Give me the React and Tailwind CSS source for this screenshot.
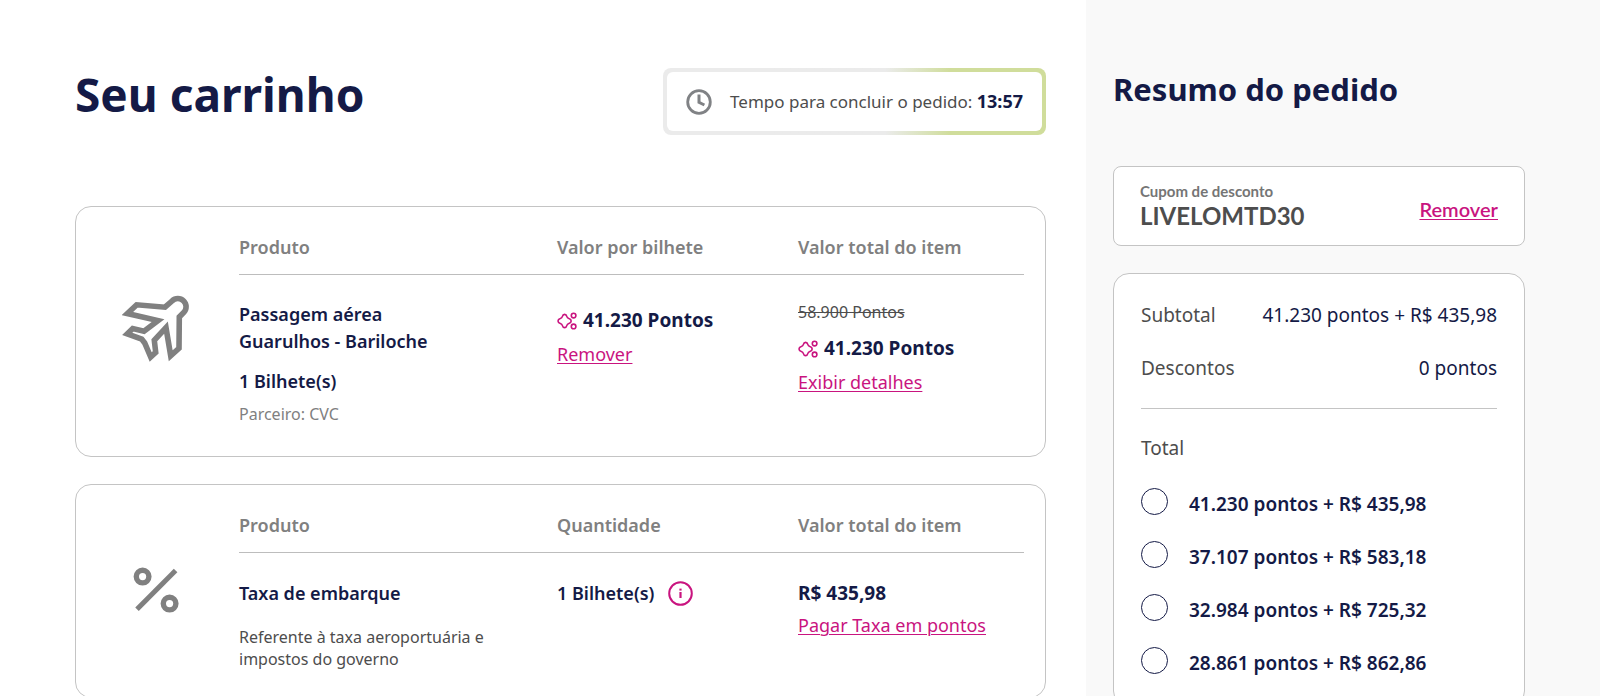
import React from "react";

const LINK = "text-[#c9147f] underline underline-offset-2 decoration-1 cursor-pointer";

function ClockIcon() {
  return (
    <svg width="26" height="26" viewBox="0 0 26 26" fill="none" stroke="#808285" aria-hidden="true">
      <circle cx="13" cy="13" r="11.3" strokeWidth="2.8" />
      <path d="M13 5.6V13.4L18.4 16" strokeWidth="3" />
    </svg>
  );
}

function PlaneIcon() {
  return (
    <svg width="68" height="68" viewBox="0 0 68 68" fill="none" stroke="#808080" strokeWidth="5.6" aria-hidden="true">
      <path d="M14.7 10.8L5.3 19.6L36 26.6L22 37.3L10.7 34.6L5.3 39.8L19.7 45L22.7 49L28.7 63L33.7 58.3L32.3 46.3L44 33.7L48.7 61.8L57 54.3L57.3 23L61.7 18.6A8.2 8.2 0 0 0 50 7L43 13.2Z" />
    </svg>
  );
}

function PercentIcon() {
  return (
    <svg width="46" height="46" viewBox="0 0 46 46" fill="none" stroke="#808080" aria-hidden="true">
      <circle cx="9.6" cy="9.6" r="6.3" strokeWidth="5.4" />
      <circle cx="36.6" cy="36.6" r="6.3" strokeWidth="5.4" />
      <path d="M42.6 3.6L4 42.2" strokeWidth="5" />
    </svg>
  );
}

function PointsIcon() {
  return (
    <svg width="20" height="18" viewBox="0 0 20 18" fill="none" stroke="#c9147f" strokeWidth="1.6" aria-hidden="true">
      <path d="M7.6 2.4C9 2.4 9.6 3.3 9.9 4.6C10.2 5.8 10.8 6.2 11.9 6.6C13.3 7 14.2 7.8 14.2 9C14.2 10.2 13.3 11 11.9 11.4C10.8 11.8 10.2 12.2 9.9 13.4C9.6 14.7 9 15.6 7.6 15.6C6.2 15.6 5.6 14.7 5.3 13.4C5 12.2 4.4 11.8 3.3 11.4C1.9 11 1 10.2 1 9C1 7.8 1.9 7 3.3 6.6C4.4 6.2 5 5.8 5.3 4.6C5.6 3.3 6.2 2.4 7.6 2.4Z" />
      <circle cx="16.6" cy="3.6" r="2.3" />
      <circle cx="16.6" cy="14.4" r="2.3" />
    </svg>
  );
}

function InfoIcon() {
  return (
    <svg width="25" height="25" viewBox="0 0 25 25" fill="none" stroke="#c9147f" aria-hidden="true">
      <circle cx="12.5" cy="12.5" r="11.3" strokeWidth="2" />
      <path d="M12.5 11V17" strokeWidth="2.2" />
      <path d="M12.5 7.6V9.6" strokeWidth="2.2" />
    </svg>
  );
}

function Points({ children }) {
  return (
    <p className="flex items-center gap-1.5 text-[19px] leading-[27px] font-bold">
      <PointsIcon />
      {children}
    </p>
  );
}

function CartItem({ icon, columns, bottom, children }) {
  return (
    <article className={`flex rounded-2xl border border-[#c4c4c4] pt-6 pr-[21px] ${bottom}`}>
      <div className="flex w-[163px] shrink-0 items-center justify-center pr-1">{icon}</div>
      <table className="w-full table-fixed border-collapse text-left text-lg leading-[27px] text-[#141a46]">
        <thead>
          <tr className="border-b border-[#bdbdbd] text-[#808080]">
            <th scope="col" className="w-[318px] pb-[11px] font-semibold leading-8">{columns[0]}</th>
            <th scope="col" className="w-[241px] pb-[11px] font-semibold leading-8">{columns[1]}</th>
            <th scope="col" className="pb-[11px] font-semibold leading-8">{columns[2]}</th>
          </tr>
        </thead>
        <tbody>
          <tr className="align-top">{children}</tr>
        </tbody>
      </table>
    </article>
  );
}

const OPTIONS = [
  "41.230 pontos + R$ 435,98",
  "37.107 pontos + R$ 583,18",
  "32.984 pontos + R$ 725,32",
  "28.861 pontos + R$ 862,86",
];

export default function App() {
  return (
    <div className="flex h-screen overflow-hidden bg-white font-['Noto_Sans',sans-serif] text-lg text-[#141a46]">
      <main className="min-w-0 flex-1 pt-[68px] pr-10 pl-[75px]">
        <header className="flex items-start justify-between">
          <h1 className="text-[46px] font-bold leading-[52px]">Seu carrinho</h1>
          <div className="rounded-lg bg-linear-to-r from-[#ebebeb] from-58% to-[#d0dd9b] to-75% p-1">
            <p className="flex h-[59px] items-center gap-[18px] rounded-md bg-white px-[19px] text-[17px] text-[#4d4d4d]">
              <ClockIcon />
              <span>
                Tempo para concluir o pedido: <strong className="text-lg font-bold text-[#141a46]">13:57</strong>
              </span>
            </p>
          </div>
        </header>

        <div className="mt-[71px] flex flex-col gap-[27px]">
          <CartItem icon={<PlaneIcon />} columns={["Produto", "Valor por bilhete", "Valor total do item"]} bottom="pb-[31px]">
            <td className="pt-[26px]">
              <p className="font-semibold">
                Passagem aérea
                <br />
                Guarulhos - Bariloche
              </p>
              <p className="mt-[13px] font-semibold">1 Bilhete(s)</p>
              <p className="mt-2 text-base leading-[22px] text-[#808080]">Parceiro: CVC</p>
            </td>
            <td className="pt-8">
              <Points>41.230 Pontos</Points>
              <button type="button" className={`mt-[7px] ${LINK}`}>Remover</button>
            </td>
            <td className="pt-[26px]">
              <p className="text-base leading-[22px] text-[#4d4d4d] line-through">58.900 Pontos</p>
              <div className="mt-3">
                <Points>41.230 Pontos</Points>
              </div>
              <button type="button" className={`mt-[7px] ${LINK}`}>Exibir detalhes</button>
            </td>
          </CartItem>

          <CartItem icon={<PercentIcon />} columns={["Produto", "Quantidade", "Valor total do item"]} bottom="pb-[27px]">
            <td className="pt-[27px]">
              <p className="font-semibold">Taxa de embarque</p>
              <p className="mt-[19px] w-[260px] text-base leading-[22px] text-[#4d4d4d]">
                Referente à taxa aeroportuária e impostos do governo
              </p>
            </td>
            <td className="pt-[27px]">
              <div className="flex items-center gap-3.5 font-semibold">
                1 Bilhete(s)
                <button type="button" aria-label="Mais informações" className="cursor-pointer">
                  <InfoIcon />
                </button>
              </div>
            </td>
            <td className="pt-[27px]">
              <p className="text-[19px] font-bold">R$ 435,98</p>
              <button type="button" className={`mt-[5px] ${LINK}`}>Pagar Taxa em pontos</button>
            </td>
          </CartItem>
        </div>
      </main>

      <aside className="w-[514px] shrink-0 bg-[#f9f9f9] pt-[68px] pr-[75px] pl-[27px]">
        <h2 className="text-[31px] font-bold leading-[42px]">Resumo do pedido</h2>

        <section className="mt-14 flex h-20 items-center justify-between rounded-lg border border-[#c4c4c4] bg-white px-[26px] font-['Lato','Noto_Sans',sans-serif]">
          <div>
            <p className="text-[15px] font-bold leading-5 text-[#757575]">Cupom de desconto</p>
            <p className="text-2xl font-bold leading-[30px] text-[#4d4d4d]">LIVELOMTD30</p>
          </div>
          <button type="button" className={`mt-1.5 text-xl font-semibold ${LINK}`}>Remover</button>
        </section>

        <section className="mt-[27px] rounded-2xl border border-[#c4c4c4] bg-white px-[27px] pt-7 pb-8 text-[19px]">
          <dl className="flex flex-col gap-[26px] leading-[27px]">
            <div className="flex justify-between">
              <dt className="text-[#4d4d4d]">Subtotal</dt>
              <dd>41.230 pontos + R$ 435,98</dd>
            </div>
            <div className="flex justify-between">
              <dt className="text-[#4d4d4d]">Descontos</dt>
              <dd>0 pontos</dd>
            </div>
          </dl>
          <hr className="mt-[26px] border-[#c4c4c4]" />
          <fieldset className="mt-[26px]">
            <legend className="leading-[27px] text-[#4d4d4d]">Total</legend>
            <div className="mt-[26px] flex flex-col gap-[26px]">
              {OPTIONS.map((option) => (
                <label key={option} className="flex cursor-pointer items-start gap-[21px] font-semibold leading-[27px]">
                  <input
                    type="radio"
                    name="total"
                    className="size-[27px] shrink-0 appearance-none rounded-full border border-[#141a46] bg-white checked:border-8"
                  />
                  <span className="pt-[5px] leading-[22px]">{option}</span>
                </label>
              ))}
            </div>
          </fieldset>
        </section>
      </aside>
    </div>
  );
}
